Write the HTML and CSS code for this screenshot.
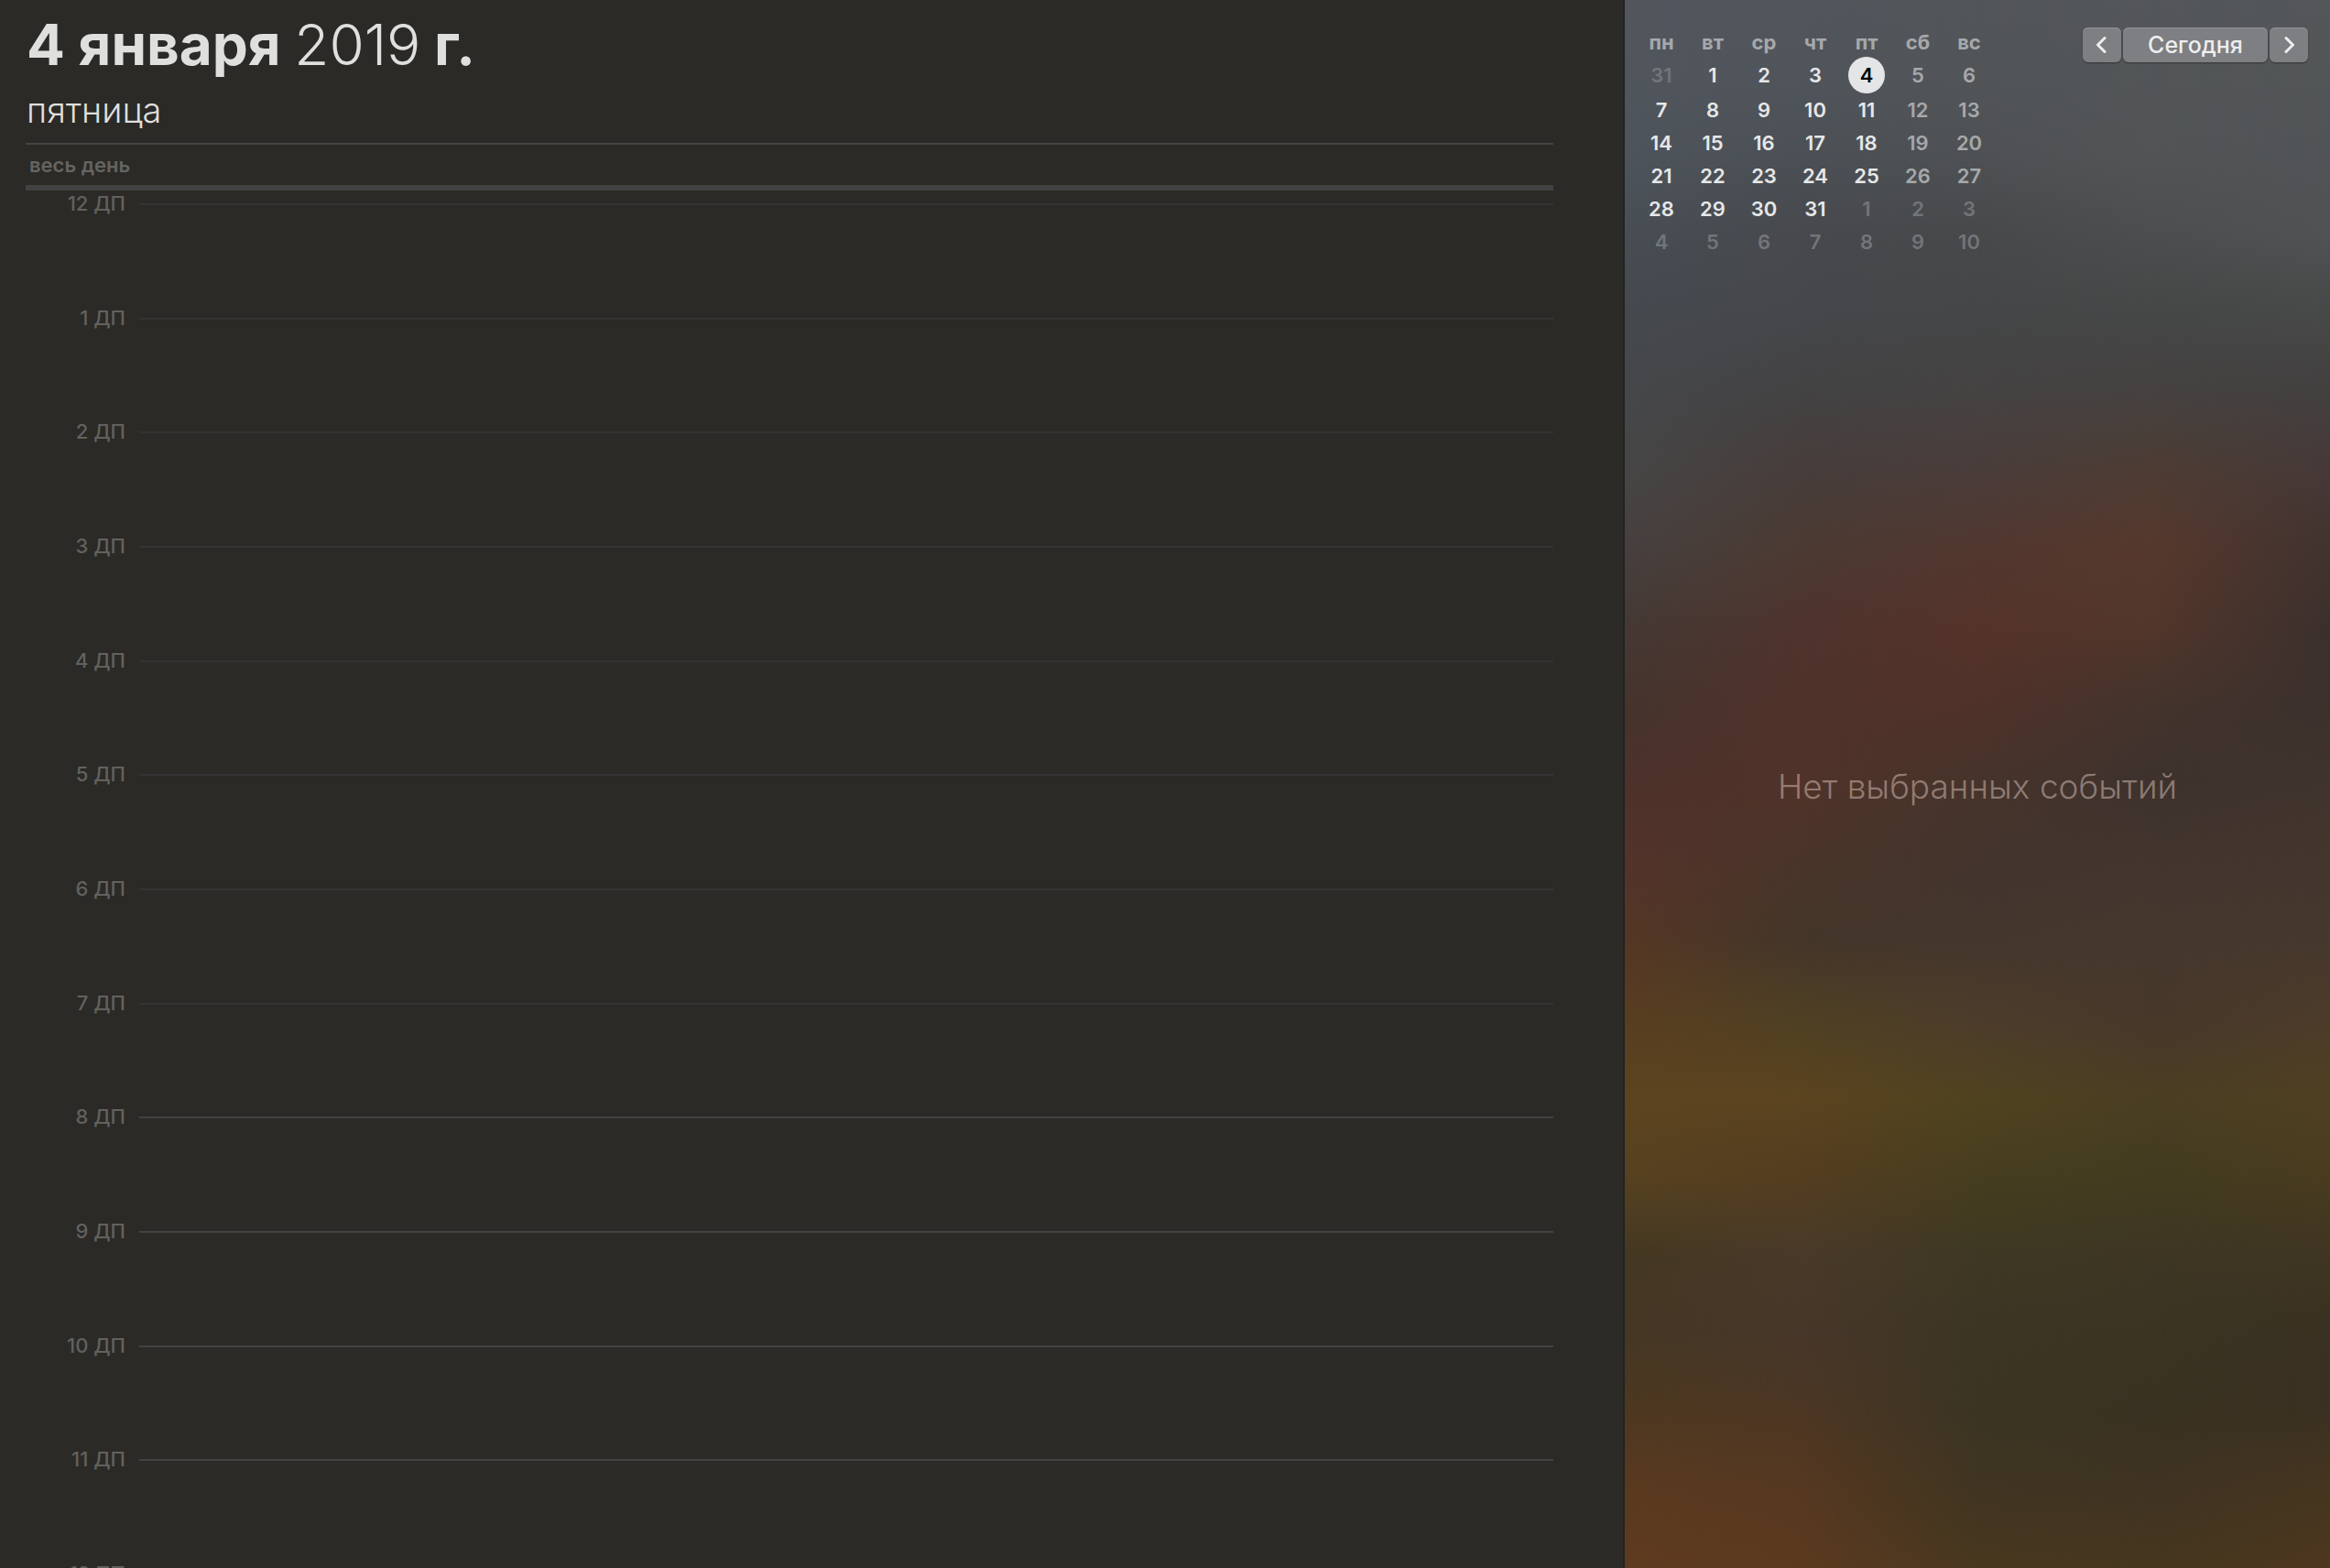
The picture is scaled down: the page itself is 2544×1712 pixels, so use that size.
FILE: index.html
```html
<!DOCTYPE html>
<html lang="ru">
<head>
<meta charset="utf-8">
<meta name="viewport" content="width=device-width, initial-scale=1">
<title>Календарь</title>
<link rel="stylesheet" href="styles.css">
</head>
<body>
<div class="app">
  <main class="day">
    <header class="day-header">
      <h1 class="date">4 января <span class="year">2019</span> г.</h1>
      <p class="weekday">пятница</p>
    </header>
    <section class="all-day">
      <span class="all-day-label">весь день</span>
    </section>
    <ol class="hours">
      <li class="hour"><span class="hour-label">12 ДП</span></li>
      <li class="hour"><span class="hour-label">1 ДП</span></li>
      <li class="hour"><span class="hour-label">2 ДП</span></li>
      <li class="hour"><span class="hour-label">3 ДП</span></li>
      <li class="hour"><span class="hour-label">4 ДП</span></li>
      <li class="hour"><span class="hour-label">5 ДП</span></li>
      <li class="hour"><span class="hour-label">6 ДП</span></li>
      <li class="hour"><span class="hour-label">7 ДП</span></li>
      <li class="hour work"><span class="hour-label">8 ДП</span></li>
      <li class="hour work"><span class="hour-label">9 ДП</span></li>
      <li class="hour work"><span class="hour-label">10 ДП</span></li>
      <li class="hour work"><span class="hour-label">11 ДП</span></li>
      <li class="hour work"><span class="hour-label">12 ПП</span></li>
    </ol>
  </main>

  <aside class="inspector">
    <div class="backdrop" aria-hidden="true">
      <span class="tint tint-1"></span>
      <span class="tint tint-2"></span>
      <span class="tint tint-3"></span>
      <span class="tint tint-4"></span>
      <span class="tint tint-5"></span>
    </div>
    <div class="inspector-top">
      <table class="month" aria-label="Январь 2019">
        <thead>
          <tr><th scope="col">пн</th><th scope="col">вт</th><th scope="col">ср</th><th scope="col">чт</th><th scope="col">пт</th><th scope="col">сб</th><th scope="col">вс</th></tr>
        </thead>
        <tbody>
          <tr class="first-week"><td class="other">31</td><td>1</td><td>2</td><td>3</td><td><span class="selected">4</span></td><td class="weekend">5</td><td class="weekend">6</td></tr>
          <tr><td>7</td><td>8</td><td>9</td><td>10</td><td>11</td><td class="weekend">12</td><td class="weekend">13</td></tr>
          <tr><td>14</td><td>15</td><td>16</td><td>17</td><td>18</td><td class="weekend">19</td><td class="weekend">20</td></tr>
          <tr><td>21</td><td>22</td><td>23</td><td>24</td><td>25</td><td class="weekend">26</td><td class="weekend">27</td></tr>
          <tr><td>28</td><td>29</td><td>30</td><td>31</td><td class="other">1</td><td class="other">2</td><td class="other">3</td></tr>
          <tr><td class="other">4</td><td class="other">5</td><td class="other">6</td><td class="other">7</td><td class="other">8</td><td class="other">9</td><td class="other">10</td></tr>
        </tbody>
      </table>
      <nav class="pager" aria-label="Выбор дня">
        <button class="button arrow" type="button" aria-label="Предыдущий день">
          <svg width="12" height="20" viewBox="0 0 12 20"><path d="M9 2.500 1.500 10 9 17.500"/></svg>
        </button>
        <button class="button today" type="button">Сегодня</button>
        <button class="button arrow" type="button" aria-label="Следующий день">
          <svg width="12" height="20" viewBox="0 0 12 20"><path d="M3 2.500 10.500 10 3 17.500"/></svg>
        </button>
      </nav>
    </div>
    <p class="empty">Нет выбранных событий</p>
  </aside>
</div>
</body>
</html>
```
FILE: styles.css
```css
* {
  box-sizing: border-box;
}

body {
  margin: 0;
  background: #2b2a26;
  color: #dfdfde;
  font-family: Inter, "Liberation Sans", sans-serif;
  font-size: 22px;
}

.app {
  display: grid;
  grid-template-columns: minmax(0, 1fr) 770px;
  height: 100vh;
  overflow: hidden;
}

/* Day view */

.day {
  display: flex;
  flex-direction: column;
  min-height: 0;
  padding: 10px 76px 0 28px;
  border-right: 2px solid #232323;
}

.day-header {
  height: 148px;
  border-bottom: 2px solid #434343;
}

.date {
  margin: 0;
  font-size: 62px;
  font-weight: 700;
  line-height: 78px;
}

.year {
  font-weight: 300;
}

.weekday {
  margin: 8px 0 0;
  font-size: 38px;
  font-weight: 300;
  line-height: 48px;
}

.date,
.weekday {
  padding-left: 1px;
}

.all-day {
  height: 50px;
  padding-left: 4px;
  border-bottom: 6px solid #424242;
  color: #656462;
  font-weight: 600;
  line-height: 44px;
}

.hours {
  display: grid;
  flex: 1;
  grid-template-rows: repeat(12, minmax(0, 1fr)) 5px;
  min-height: 0;
  margin: 0;
  padding: 3px 0 0;
  list-style: none;
}

.hour {
  display: flex;
  gap: 15px;
  color: #62615f;
  font-weight: 500;
  line-height: 22px;
}

.hour-label {
  flex: 0 0 109px;
  text-align: right;
}

.hour::after {
  flex: 1;
  height: 2px;
  margin-top: 11px;
  background: #343334;
  content: "";
}

.hour.work::after {
  background: #434244;
}

/* Side panel */

.inspector {
  display: grid;
  position: relative;
  min-height: 0;
}

.inspector-top,
.empty {
  grid-area: 1 / 1;
  position: relative;
}

.inspector-top {
  display: flex;
  align-items: flex-start;
  justify-content: space-between;
  padding: 30px 24px 0 12px;
}

.month {
  border-collapse: collapse;
  table-layout: fixed;
  width: 392px;
  font-weight: 600;
  line-height: 28px;
  text-align: center;
}

.month th,
.month td {
  height: 36px;
  padding: 0;
  color: #e6e7e8;
}

.month th {
  height: 32px;
  color: #a6a8ab;
}

.month .first-week td {
  height: 40px;
}

.month .weekend {
  color: #a6a8aa;
}

.month .other {
  color: #727578;
}

.selected {
  display: block;
  width: 40px;
  margin: 0 auto;
  border-radius: 50%;
  background: #e4e5e7;
  color: #000;
  line-height: 40px;
}

.pager {
  display: flex;
  gap: 2px;
}

.button {
  display: flex;
  align-items: center;
  justify-content: center;
  height: 38px;
  padding: 0;
  border: 0;
  border-radius: 6px;
  background: #7d7f82;
  box-shadow: inset 0 1px #929497, 0 1px 2px rgba(0, 0, 0, 0.4);
  color: #eeeeef;
  font: 500 25px/38px Inter, "Liberation Sans", sans-serif;
}

.arrow {
  width: 42px;
}

.today {
  width: 158px;
}

.button svg {
  fill: none;
  stroke: currentColor;
  stroke-width: 3;
  stroke-linecap: round;
  stroke-linejoin: round;
}

.empty {
  place-self: center;
  margin: 0;
  padding-top: 6px;
  color: rgba(225, 205, 197, 0.48);
  font-size: 37px;
  font-weight: 300;
  line-height: 48px;
}

/* Wallpaper glow: vertical colour ramps that fade into one another sideways */

.backdrop,
.tint {
  position: absolute;
  inset: 0;
}

.tint-1 {
  background: linear-gradient(#52565d, #51565d, #4e545b, #484e54, #45494e, #45474a, #474646, #47403f, #453934, #46342d, #4d322b, #54332b, #553724, #593e21, #5d441f, #574220, #443822, #453824, #4e3820, #5a3a20, #5f3b20);
}

.tint-2 {
  background: linear-gradient(#52565d, #50555b, #4b5055, #47494d, #45474b, #444344, #473d3b, #4b3a32, #4f342e, #50332b, #50332a, #4a352a, #44362a, #4f4023, #5b441f, #543d20, #493a29, #47372a, #4d3724, #563820, #5b3a1f);
  mask-image: linear-gradient(90deg, transparent, #000 25%);
}

.tint-3 {
  background: linear-gradient(#535659, #515558, #4e5154, #47494b, #444647, #464343, #4a3d3b, #51372f, #55332b, #50322a, #46342b, #43352d, #44372d, #4c3c2b, #504320, #463e1f, #3f3823, #3c3524, #3b3423, #403521, #493820);
  mask-image: linear-gradient(90deg, transparent 25%, #000 50%);
}

.tint-4 {
  background: linear-gradient(#54575a, #535658, #525456, #4c4e4f, #454747, #464241, #4d3c33, #56382d, #52362b, #43342c, #3e322e, #43362e, #46382e, #47382b, #4a3e22, #433c20, #3e3623, #3b3423, #3a3222, #3f3322, #46371f);
  mask-image: linear-gradient(90deg, transparent 50%, #000 75%);
}

.tint-5 {
  background: linear-gradient(#545759, #535658, #515457, #505254, #474948, #434040, #463938, #41332f, #3b302d, #3c302d, #40342d, #44362e, #46382d, #4c3b2a, #4f4021, #493c1f, #3f3522, #3a3122, #3b3122, #45351f, #4e371f);
  mask-image: linear-gradient(90deg, transparent 75%, #000);
}
```
